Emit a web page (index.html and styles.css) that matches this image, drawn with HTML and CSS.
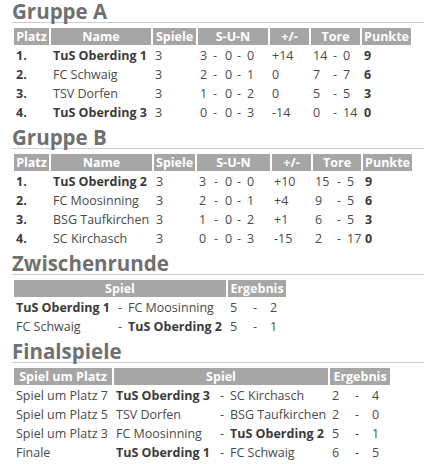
FILE: index.html
```html
<!DOCTYPE html>
<html lang="de">
<head>
<meta charset="utf-8">
<link rel="stylesheet" href="styles.css">
</head>
<body>
<div class="page">
  <h2 class="title">Gruppe A</h2>
  <table class="tbl tbl-a">
    <colgroup>
      <col class="w35"><col class="w100"><col class="w43">
      <col class="w11"><col class="w10"><col class="w10"><col class="w8"><col class="w23">
      <col class="w39"><col class="w18"><col class="w8"><col class="w19"><col class="w49">
    </colgroup>
    <thead>
      <tr><th>Platz</th><th>Name</th><th>Spiele</th><th colspan="5">S-U-N</th><th>+/-</th><th colspan="3">Tore</th><th>Punkte</th></tr>
    </thead>
    <tbody>
      <tr><td class="b">1.</td><td class="b">TuS Oberding 1</td><td>3</td><td>3</td><td>-</td><td>0</td><td>-</td><td>0</td><td>+14</td><td>14</td><td>-</td><td>0</td><td class="b">9</td></tr>
      <tr><td class="b">2.</td><td>FC Schwaig</td><td>3</td><td>2</td><td>-</td><td>0</td><td>-</td><td>1</td><td>0</td><td>7</td><td>-</td><td>7</td><td class="b">6</td></tr>
      <tr><td class="b">3.</td><td>TSV Dorfen</td><td>3</td><td>1</td><td>-</td><td>0</td><td>-</td><td>2</td><td>0</td><td>5</td><td>-</td><td>5</td><td class="b">3</td></tr>
      <tr><td class="b">4.</td><td class="b">TuS Oberding 3</td><td>3</td><td>0</td><td>-</td><td>0</td><td>-</td><td>3</td><td>-14</td><td>0</td><td>-</td><td>14</td><td class="b">0</td></tr>
    </tbody>
  </table>

  <h2 class="title">Gruppe B</h2>
  <table class="tbl tbl-b">
    <colgroup>
      <col class="w35"><col class="w101"><col class="w41">
      <col class="w13"><col class="w9"><col class="w10"><col class="w8"><col class="w25">
      <col class="w39"><col class="w20"><col class="w8"><col class="w16"><col class="w49">
    </colgroup>
    <thead>
      <tr><th>Platz</th><th>Name</th><th>Spiele</th><th colspan="5">S-U-N</th><th>+/-</th><th colspan="3">Tore</th><th>Punkte</th></tr>
    </thead>
    <tbody>
      <tr><td class="b">1.</td><td class="b">TuS Oberding 2</td><td>3</td><td>3</td><td>-</td><td>0</td><td>-</td><td>0</td><td>+10</td><td>15</td><td>-</td><td>5</td><td class="b">9</td></tr>
      <tr><td class="b">2.</td><td>FC Moosinning</td><td>3</td><td>2</td><td>-</td><td>0</td><td>-</td><td>1</td><td>+4</td><td>9</td><td>-</td><td>5</td><td class="b">6</td></tr>
      <tr><td class="b">3.</td><td>BSG Taufkirchen</td><td>3</td><td>1</td><td>-</td><td>0</td><td>-</td><td>2</td><td>+1</td><td>6</td><td>-</td><td>5</td><td class="b">3</td></tr>
      <tr><td class="b">4.</td><td>SC Kirchasch</td><td>3</td><td>0</td><td>-</td><td>0</td><td>-</td><td>3</td><td>-15</td><td>2</td><td>-</td><td>17</td><td class="b">0</td></tr>
    </tbody>
  </table>

  <h2 class="title">Zwischenrunde</h2>
  <table class="tbl tbl-z">
    <colgroup>
      <col class="w100"><col class="w8"><col class="w100">
      <col class="w21"><col class="w15"><col class="w18">
    </colgroup>
    <thead>
      <tr><th colspan="3">Spiel</th><th colspan="3">Ergebnis</th></tr>
    </thead>
    <tbody>
      <tr><td class="b">TuS Oberding 1</td><td>-</td><td>FC Moosinning</td><td>5</td><td>-</td><td>2</td></tr>
      <tr><td>FC Schwaig</td><td>-</td><td class="b">TuS Oberding 2</td><td>5</td><td>-</td><td>1</td></tr>
    </tbody>
  </table>

  <h2 class="title">Finalspiele</h2>
  <table class="tbl tbl-f">
    <colgroup>
      <col class="w98"><col class="w102"><col class="w8"><col class="w100">
      <col class="w21"><col class="w15"><col class="w20">
    </colgroup>
    <thead>
      <tr><th>Spiel um Platz</th><th colspan="3">Spiel</th><th colspan="3">Ergebnis</th></tr>
    </thead>
    <tbody>
      <tr><td>Spiel um Platz 7</td><td class="b">TuS Oberding 3</td><td>-</td><td>SC Kirchasch</td><td>2</td><td>-</td><td>4</td></tr>
      <tr><td>Spiel um Platz 5</td><td>TSV Dorfen</td><td>-</td><td>BSG Taufkirchen</td><td>2</td><td>-</td><td>0</td></tr>
      <tr><td>Spiel um Platz 3</td><td>FC Moosinning</td><td>-</td><td class="b">TuS Oberding 2</td><td>5</td><td>-</td><td>1</td></tr>
      <tr><td>Finale</td><td class="b">TuS Oberding 1</td><td>-</td><td>FC Schwaig</td><td>6</td><td>-</td><td>5</td></tr>
    </tbody>
  </table>
</div>
</body>
</html>
```

FILE: styles.css
```css
html, body {
  margin: 0;
  padding: 0;
  background: #ffffff;
}

.page {
  padding: 0 0 0 12px;
  font-family: "Open Sans", "DejaVu Sans", sans-serif;
  font-size: 12.5px;
  color: #4a4a4a;
}

.title {
  margin: 0 0 3px 0;
  font-size: 20.5px;
  line-height: 22px;
  font-weight: 700;
  color: #707070;
  border-bottom: 1px solid #cccccc;
}

.tbl {
  border-collapse: separate;
  border-spacing: 2px;
  table-layout: fixed;
  margin-bottom: 3px;
}

.tbl-a { width: 401px; }
.tbl-b { width: 402px; }
.tbl-z { width: 276px; }
.tbl-f { width: 380px; }

.tbl th {
  background: #a6a6a6;
  color: #ffffff;
  font-weight: 700;
  text-align: center;
  padding: 0 2px;
  white-space: nowrap;
  overflow: hidden;
}

.tbl td {
  padding: 0 2px;
  text-align: left;
  white-space: nowrap;
}

.tbl td.b {
  font-weight: 700;
  color: #3a3a3a;
}

.w8 { width: 8px; }
.w9 { width: 9px; }
.w10 { width: 10px; }
.w11 { width: 11px; }
.w13 { width: 13px; }
.w15 { width: 15px; }
.w16 { width: 16px; }
.w18 { width: 18px; }
.w19 { width: 19px; }
.w20 { width: 20px; }
.w21 { width: 21px; }
.w23 { width: 23px; }
.w25 { width: 25px; }
.w35 { width: 35px; }
.w39 { width: 39px; }
.w41 { width: 41px; }
.w43 { width: 43px; }
.w49 { width: 49px; }
.w98 { width: 98px; }
.w100 { width: 100px; }
.w101 { width: 101px; }
.w102 { width: 102px; }
```
